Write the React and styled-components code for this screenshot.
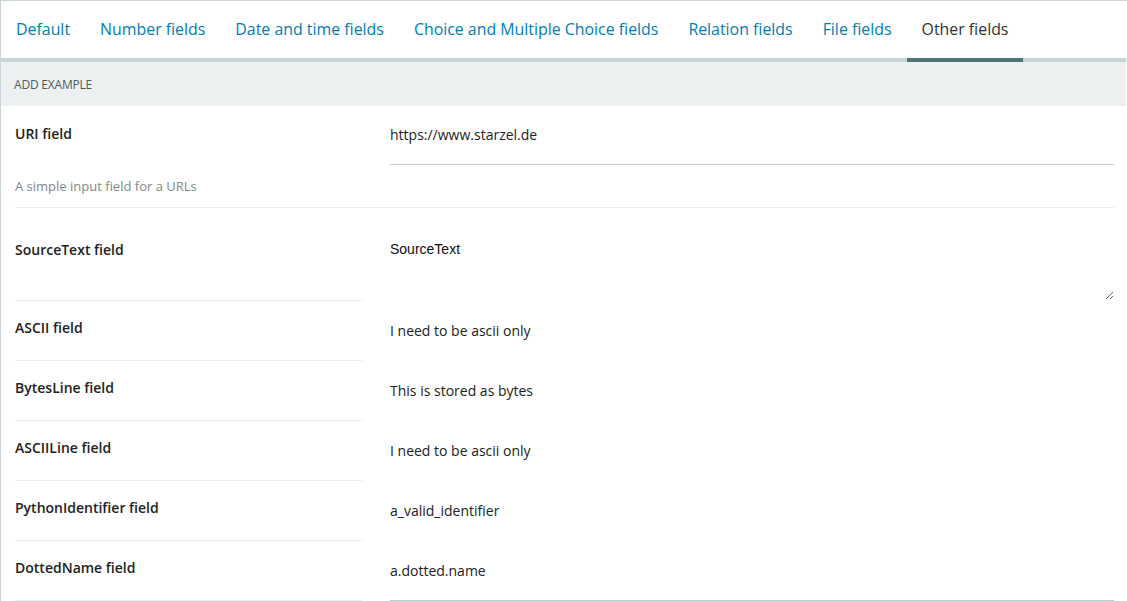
import React from "react";
import styled, { createGlobalStyle } from "styled-components";

const Global = createGlobalStyle`
  html, body { margin: 0; padding: 0; background: #fff; }
  body { font-family: "Open Sans", "DejaVu Sans", sans-serif; color: #222; }
  * { box-sizing: border-box; }
`;

const tabs = [
  "Default",
  "Number fields",
  "Date and time fields",
  "Choice and Multiple Choice fields",
  "Relation fields",
  "File fields",
  "Other fields",
];

const rows = [
  { label: "ASCII field", value: "I need to be ascii only" },
  { label: "BytesLine field", value: "This is stored as bytes" },
  { label: "ASCIILine field", value: "I need to be ascii only" },
  { label: "PythonIdentifier field", value: "a_valid_identifier" },
  { label: "DottedName field", value: "a.dotted.name", focused: true },
];

export default function App() {
  return (
    <>
      <Global />
      <Frame>
        <TabBar>
          {tabs.map((t) => (
            <Tab key={t} $active={t === "Other fields"}>{t}</Tab>
          ))}
        </TabBar>

        <Band>ADD EXAMPLE</Band>

        <Form>
          <WideRow>
            <Grid>
              <Label>URI field</Label>
              <FieldCell>
                <Input defaultValue="https://www.starzel.de" $line="#c7d0d2" />
              </FieldCell>
            </Grid>
            <Help>A simple input field for a URLs</Help>
          </WideRow>

          <Grid>
            <Label $tall>SourceText field</Label>
            <FieldCell>
              <Area defaultValue="SourceText" />
            </FieldCell>
          </Grid>

          {rows.map((r) => (
            <Grid key={r.label}>
              <Label>{r.label}</Label>
              <FieldCell>
                <Input
                  defaultValue={r.value}
                  $line={r.focused ? "#b7d0d3" : "#fff"}
                  $short
                />
              </FieldCell>
            </Grid>
          ))}
        </Form>
      </Frame>
    </>
  );
}

const Frame = styled.div`
  width: 1127px;
  height: 601px;
  overflow: hidden;
  border-left: 1px solid #c9d5d8;
  border-top: 1px solid #c9d5d8;
`;

const TabBar = styled.div`
  display: flex;
  height: 61px;
  border-bottom: 4px solid #c7d5d8;
  width: 1125px;
`;

const Tab = styled.div`
  display: flex;
  align-items: center;
  padding: 0 15px 2px;
  height: 61px;
  margin-bottom: -4px;
  border-bottom: 4px solid ${(p) => (p.$active ? "#507473" : "transparent")};
  font-size: 15.9px;
  color: ${(p) => (p.$active ? "#333" : "#007eb1")};
  white-space: nowrap;
`;

const Band = styled.div`
  width: 1125px;
  height: 44px;
  background: #ecf0f1;
  padding-left: 13px;
  display: flex;
  align-items: center;
  font-size: 12px;
  color: #4c5f5f;
  letter-spacing: -0.2px;
`;

const Form = styled.div`
  padding: 0 13px 0 14px;
`;

const WideRow = styled.div`
  border-bottom: 1px solid #e9eded;
  padding-bottom: 13px;
`;

const Grid = styled.div`
  display: grid;
  grid-template-columns: 347px 1fr;
  column-gap: 28px;
`;

const Label = styled.div`
  font-size: 14px;
  font-weight: 600;
  line-height: 20px;
  color: #222;
  padding-top: ${(p) => (p.$tall ? "32px" : "17px")};
  height: ${(p) => (p.$tall ? "93px" : "60px")};
  border-bottom: 1px solid #e9eded;
  ${WideRow} & {
    border-bottom: none;
    height: auto;
    padding-top: 18px;
  }
`;

const FieldCell = styled.div`
  display: flex;
  flex-direction: column;
`;

const Input = styled.input`
  border: none;
  border-bottom: 1px solid ${(p) => p.$line};
  outline: none;
  font-family: "Open Sans", sans-serif;
  font-size: 14px;
  color: #222;
  padding: 0;
  margin-top: ${(p) => (p.$short ? "0" : "15px")};
  height: ${(p) => (p.$short ? "60px" : "44px")};
  padding-bottom: ${(p) => (p.$short ? "0" : "16px")};
  background: #fff;
`;

const Area = styled.textarea`
  margin-top: 33px;
  height: 59px;
  border: none;
  outline: none;
  resize: vertical;
  padding: 0;
  font-family: "Liberation Sans", Arial, sans-serif;
  font-size: 14px;
  color: #111;
  background: #fff;
`;

const Help = styled.div`
  margin-top: 13px;
  font-size: 13px;
  line-height: 16px;
  color: #80898d;
`;
